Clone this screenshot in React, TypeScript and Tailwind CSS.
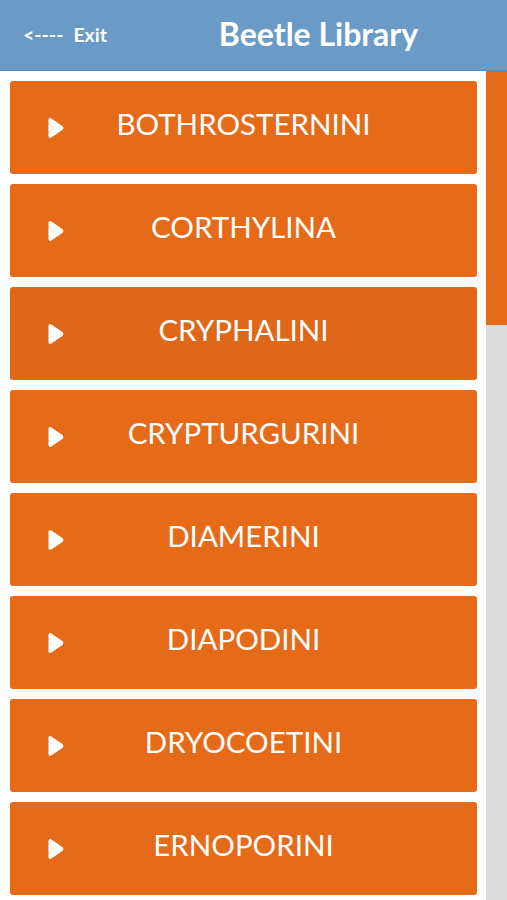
const tribes = [
  "BOTHROSTERNINI",
  "CORTHYLINA",
  "CRYPHALINI",
  "CRYPTURGURINI",
  "DIAMERINI",
  "DIAPODINI",
  "DRYOCOETINI",
  "ERNOPORINI",
];

const PlayIcon = () => (
  <svg width="19" height="22" viewBox="0 0 19 22" className="shrink-0">
    <path
      d="M2.5 3 C2.5 1.3 4 0.6 5.3 1.4 L16.4 9 C17.6 9.8 17.6 12.2 16.4 13 L5.3 20.6 C4 21.4 2.5 20.7 2.5 19 Z"
      fill="#ffffff"
    />
  </svg>
);

const App = () => {
  return (
    <div className="w-[507px] h-[900px] overflow-hidden flex flex-col bg-white font-['Lato','Open_Sans',sans-serif]">
      {/* header */}
      <div className="h-[71px] shrink-0 bg-[#6a9bc6] flex items-center border-b border-[#5d8cb8]">
        <div className="w-[130px] pl-[23px] text-white font-bold text-[19.5px] flex items-center">
          <span>&lt;----</span>
          <span className="ml-[10px]">Exit</span>
        </div>
        <div className="flex-1 text-center text-white font-bold text-[32px] pb-[3px]">
          Beetle Library
        </div>
      </div>

      <div className="flex flex-1 min-h-0">
        {/* list */}
        <ul className="w-[486px] flex flex-col gap-[10px] pl-[10px] pr-[9px] pt-[10px]">
          {tribes.map((name, i) => (
            <li
              key={name}
              className={`h-[93px] shrink-0 rounded-[3px] flex items-center pl-[36px] ${
                i === 2 ? "bg-[#de6719]" : "bg-[#e66b19]"
              }`}
            >
              <PlayIcon />
              <p className="flex-1 text-center pr-[55px] pb-[6px] text-white text-[29.5px]">
                {name}
              </p>
            </li>
          ))}
        </ul>

        {/* scrollbar */}
        <div className="w-[21px] flex flex-col bg-[#dcdcdc]">
          <div className="h-[254px] bg-[#e66b19]" />
        </div>
      </div>
    </div>
  );
};

export default App;
